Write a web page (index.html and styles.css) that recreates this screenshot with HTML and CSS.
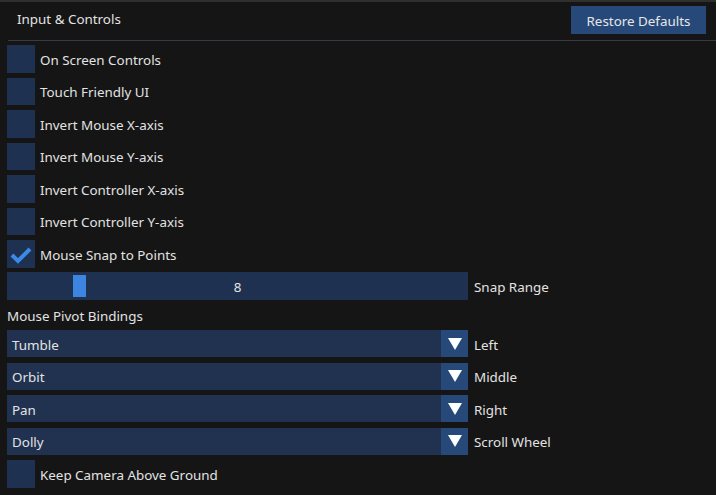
FILE: index.html
```html
<!DOCTYPE html>
<html>
<head>
<meta charset="utf-8">
<link rel="stylesheet" href="styles.css">
</head>
<body>
<div class="window">
  <div class="header">
    <div class="title">Input &amp; Controls</div>
    <button class="btn">Restore Defaults</button>
  </div>
  <div class="content">
    <div class="row"><span class="check"></span><span class="label">On Screen Controls</span></div>
    <div class="row"><span class="check"></span><span class="label">Touch Friendly UI</span></div>
    <div class="row"><span class="check"></span><span class="label">Invert Mouse X-axis</span></div>
    <div class="row"><span class="check"></span><span class="label">Invert Mouse Y-axis</span></div>
    <div class="row"><span class="check"></span><span class="label">Invert Controller X-axis</span></div>
    <div class="row"><span class="check"></span><span class="label">Invert Controller Y-axis</span></div>
    <div class="row"><span class="check"><svg width="27" height="27" viewBox="0 0 27 27"><path d="M5 15 L11 21 L23 9" fill="none" stroke="#3d8ae6" stroke-width="4"/></svg></span><span class="label">Mouse Snap to Points</span></div>
    <div class="row">
      <div class="slider"><span class="grab"></span><span class="value">8</span></div>
      <span class="wlabel">Snap Range</span>
    </div>
    <div class="text">Mouse Pivot Bindings</div>
    <div class="row">
      <div class="combo"><span class="ctext">Tumble</span><span class="arrow"><span class="tri"></span></span></div>
      <span class="wlabel">Left</span>
    </div>
    <div class="row">
      <div class="combo"><span class="ctext">Orbit</span><span class="arrow"><span class="tri"></span></span></div>
      <span class="wlabel">Middle</span>
    </div>
    <div class="row">
      <div class="combo"><span class="ctext">Pan</span><span class="arrow"><span class="tri"></span></span></div>
      <span class="wlabel">Right</span>
    </div>
    <div class="row">
      <div class="combo"><span class="ctext">Dolly</span><span class="arrow"><span class="tri"></span></span></div>
      <span class="wlabel">Scroll Wheel</span>
    </div>
    <div class="row"><span class="check"></span><span class="label">Keep Camera Above Ground</span></div>
  </div>
</div>
</body>
</html>
```
FILE: styles.css
```css
html, body {
  margin: 0;
  padding: 0;
  background: #151515;
}
body {
  font-family: "Noto Sans", "Open Sans", sans-serif;
  font-size: 13.4px;
  color: #e3e3e3;
  width: 716px;
  height: 495px;
  overflow: hidden;
}
.window {
  border-top: 2px solid #2f2f2f;
}
.header {
  height: 38px;
  display: flex;
  align-items: center;
  justify-content: space-between;
  margin-left: 8px;
  border-bottom: 1px solid #3a3a44;
}
.title {
  padding-left: 9px;
  margin-top: -5px;
}
.btn {
  font-family: inherit;
  font-size: 13.4px;
  color: #e6e6e6;
  background: #27497a;
  border: none;
  width: 135px;
  height: 28px;
  margin-right: 10px;
  margin-top: -2px;
  padding: 1px 0 0 0;
}
.content {
  display: flex;
  flex-direction: column;
  gap: 5px;
  padding: 4px 0 0 7px;
}
.row {
  display: flex;
  align-items: center;
  height: 27.5px;
}
.check {
  width: 28px;
  height: 27.5px;
  background: #1f3150;
  display: block;
}
.check svg { display: block; }
.label {
  margin-left: 5px;
  padding-top: 2px;
}
.slider {
  position: relative;
  width: 461px;
  height: 28px;
  background: #1f3150;
  display: flex;
  align-items: center;
  justify-content: center;
}
.grab {
  position: absolute;
  left: 66px;
  top: 3px;
  width: 13px;
  height: 22px;
  background: #3d85e0;
}
.value {
  position: relative;
  padding-top: 2px;
}
.wlabel {
  margin-left: 6px;
  padding-top: 2px;
}
.text {
  height: 20px;
  line-height: 20px;
  padding-top: 1px;
  box-sizing: border-box;
}
.combo {
  width: 461px;
  height: 27px;
  background: #203250;
  display: flex;
  align-items: center;
  justify-content: space-between;
}
.ctext {
  padding-left: 5px;
  padding-top: 2px;
}
.arrow {
  width: 27px;
  height: 27px;
  background: #26497a;
  display: flex;
  align-items: center;
  justify-content: center;
}
.tri {
  width: 0;
  height: 0;
  border-left: 7px solid transparent;
  border-right: 7px solid transparent;
  border-top: 12px solid #ffffff;
}
```
